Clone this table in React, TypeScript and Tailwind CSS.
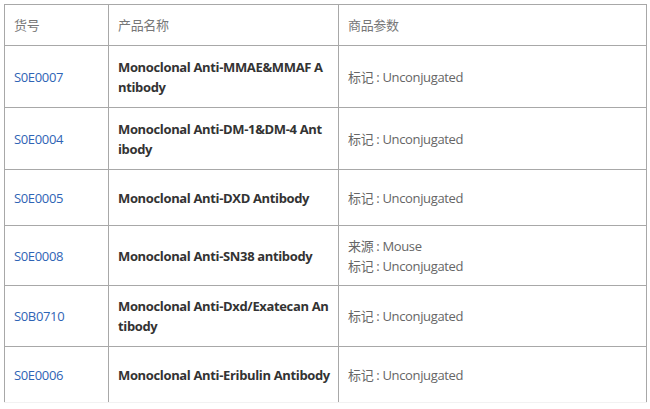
import React from 'react';

// product rows; names are pre-split where the original page wraps them
const ROWS = [
    { sku: 'S0E0007', name: ['Monoclonal Anti-MMAE&MMAF A', 'ntibody'], params: ['标记 : Unconjugated'], h: 'h-[62px]' },
    { sku: 'S0E0004', name: ['Monoclonal Anti-DM-1&DM-4 Ant', 'ibody'], params: ['标记 : Unconjugated'], h: 'h-[62px]' },
    { sku: 'S0E0005', name: ['Monoclonal Anti-DXD Antibody'], params: ['标记 : Unconjugated'], h: 'h-[56px]' },
    { sku: 'S0E0008', name: ['Monoclonal Anti-SN38 antibody'], params: ['来源 : Mouse', '标记 : Unconjugated'], h: 'h-[60px]' },
    { sku: 'S0B0710', name: ['Monoclonal Anti-Dxd/Exatecan An', 'tibody'], params: ['标记 : Unconjugated'], h: 'h-[61px]' },
    { sku: 'S0E0006', name: ['Monoclonal Anti-Eribulin Antibody'], params: ['标记 : Unconjugated'], h: 'h-[56px]' },
];

export default function App() {
    return (
        <div className="bg-white w-[650px] h-[409px] overflow-hidden pt-[4px] pl-[4px] font-['Open_Sans','Noto_Sans_CJK_SC',sans-serif] text-[13px] leading-[20px] tracking-[-0.35px]">
            <table className="border-collapse table-fixed w-[642px]">
                <colgroup>
                    <col className="w-[104px]" />
                    <col className="w-[230px]" />
                    <col className="w-[308px]" />
                </colgroup>
                <thead>
                    <tr className="h-[41px] text-[#777]">
                        <th className="border border-[#a8a8a8] px-[9px] text-left font-normal">货号</th>
                        <th className="border border-[#a8a8a8] px-[9px] text-left font-normal">产品名称</th>
                        <th className="border border-[#a8a8a8] px-[9px] text-left font-normal">商品参数</th>
                    </tr>
                </thead>
                <tbody>
                    {ROWS.map((row, i) => (
                        <tr key={row.sku} className={row.h}>
                            <td className={`border border-[#a8a8a8] px-[9px] text-[#2f64b5] ${i === ROWS.length - 1 ? 'border-b-[#f2f2f2]' : ''}`}>
                                {row.sku}
                            </td>
                            <td className={`border border-[#a8a8a8] pl-[9px] pr-[4px] font-bold text-[#333] whitespace-nowrap ${i === ROWS.length - 1 ? 'border-b-[#f2f2f2]' : ''}`}>
                                {row.name.map((line) => (
                                    <div key={line}>{line}</div>
                                ))}
                            </td>
                            <td className={`border border-[#a8a8a8] px-[9px] text-[#666] ${i === ROWS.length - 1 ? 'border-b-[#f2f2f2]' : ''}`}>
                                {row.params.map((p) => (
                                    <div key={p}>{p}</div>
                                ))}
                            </td>
                        </tr>
                    ))}
                </tbody>
            </table>
        </div>
    );
}
